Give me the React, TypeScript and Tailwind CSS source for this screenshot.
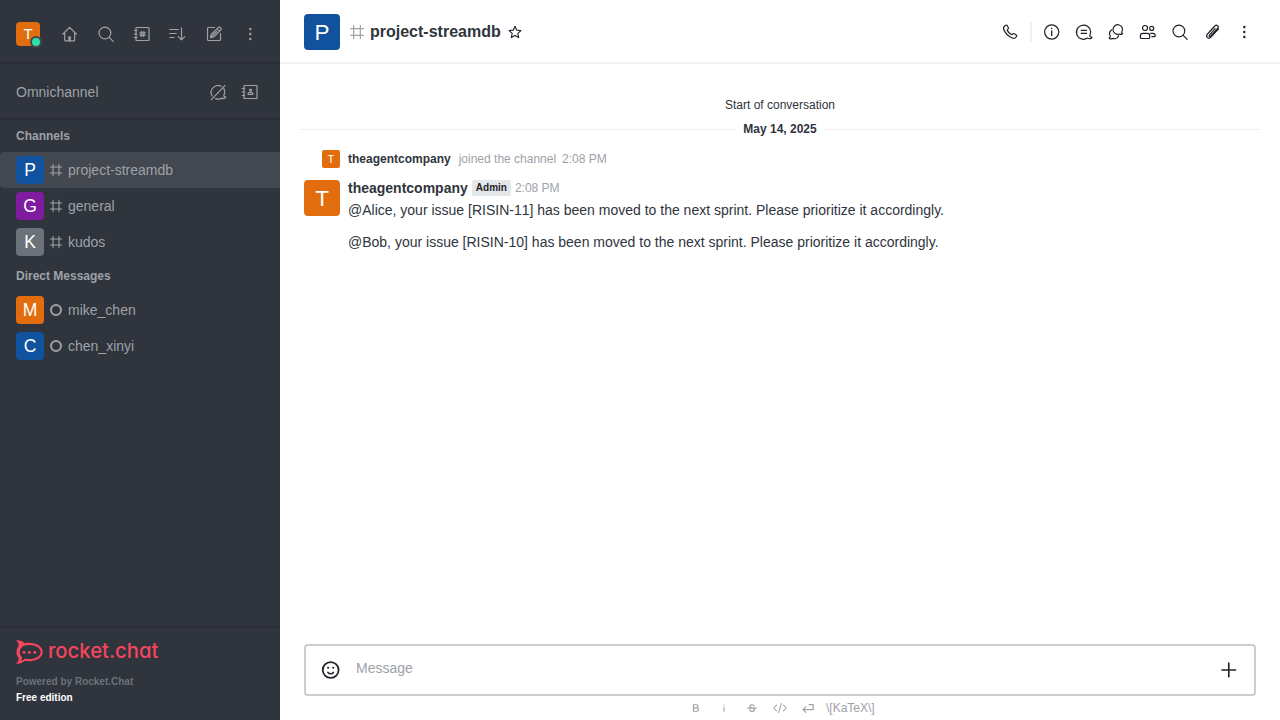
import type { ReactNode } from 'react';

type IconProps = { children: ReactNode; size?: number; className?: string; width?: number };

function Icon({ children, size = 20, className = '', width = 1.2 }: IconProps) {
  return (
    <svg
      width={size}
      height={size}
      viewBox="0 0 20 20"
      fill="none"
      stroke="currentColor"
      strokeWidth={width}
      strokeLinecap="round"
      strokeLinejoin="round"
      className={`shrink-0 ${className}`}
    >
      {children}
    </svg>
  );
}

const Home = () => (
  <Icon>
    <path d="M2.700 10.200 9.600 3.400l6.900 6.800M4.700 8.600v7.400a.9.9 0 0 0 .9.9h8.100a.9.9 0 0 0 .9-.9V8.600" />
    <path d="M8.600 16.800v-4.200h2v4.200z" fill="currentColor" strokeWidth="0.600" />
  </Icon>
);
const Search = () => (
  <Icon>
    <circle cx="8.900" cy="9" r="5.900" />
    <path d="m13.200 13.300 4 4" />
  </Icon>
);
const Directory = () => (
  <Icon>
    <rect x="4" y="3.500" width="13" height="13" rx="0.600" />
    <path d="M2.200 6.500H5M2.200 10H5M2.200 13.500H5" />
    <path d="M9.500 7.500l-.3 5M11.900 7.500l-.3 5M8 8.900h5.200M7.900 11.200h5.200" strokeWidth="1.300" />
  </Icon>
);
const Sort = () => (
  <Icon>
    <path d="M1.800 5.500h8.600M1.800 9.500h6.400M1.800 13.500h4.400M13.500 3.800v12M10.300 12.700l3.200 3.200 3.200-3.200" />
  </Icon>
);
const Compose = () => (
  <Icon>
    <path d="M10.500 3.500H4.400a.9.9 0 0 0-.9.9v11.200a.9.9 0 0 0 .9.9h11.200a.9.9 0 0 0 .9-.9V9.500" />
    <path d="m6.500 13.700.7-3.200 7.200-7.200a1.200 1.200 0 0 1 1.700 0l.8.8a1.200 1.200 0 0 1 0 1.700L9.700 13zM13.100 4.700l2.400 2.400M7.200 13l5.500-5.500" />
  </Icon>
);
const Kebab = () => (
  <Icon>
    <g fill="currentColor" stroke="none">
      <circle cx="10.300" cy="4.900" r="1.250" />
      <circle cx="10.300" cy="9.900" r="1.250" />
      <circle cx="10.300" cy="14.900" r="1.250" />
    </g>
  </Icon>
);
const LivechatOff = () => (
  <Icon>
    <path d="M4.100 14A7 7 0 0 1 13.400 4.300M15.700 6.300c1.400 2.400 1.400 4.700.2 7-.4.8.5 1.500 1.900 1.900-.7 1.300-2.200 1.700-3.800.9-2.200 1.200-4.400 1.300-6.500.5M3.400 17.600 17.100 3.400" />
  </Icon>
);
const Contacts = () => (
  <Icon>
    <rect x="4" y="3.500" width="13" height="13" rx="0.600" />
    <path d="M2.200 6.500h2.600M2.200 10h2.600M2.200 13.500h2.600" />
    <circle cx="10.500" cy="8.200" r="1" />
    <path d="M8.100 12.400v-1c0-.5.4-.9.9-.9h3c.5 0 .9.4.9.9v1z" />
  </Icon>
);
const Hash = ({ size = 16, className = '' }: { size?: number; className?: string }) => (
  <Icon size={size} className={className} width={1.350}>
    <path d="M6.300 2.900v14.200M13.700 2.900v14.200M2.900 6.300h14.200M2.900 13.700h14.200" />
  </Icon>
);
const Phone = () => (
  <Icon>
    <path d="M4.200 4.500 5.400 3.400c.6-.5 1.300-.4 1.800.2l1.100 1.900c.3.6.2 1.100-.3 1.600l-.8.8c.5 1.700 2.800 4 4.700 4.800l.9-.8c.5-.4 1-.5 1.600-.1l1.800 1.200c.6.500.7 1.100.2 1.700l-1.200 1.200c-1 .9-2.600.6-4.900-.8-2.900-1.700-4.700-3.700-6-6.200C3.300 6.900 3.300 5.400 4.200 4.500Z" />
  </Icon>
);
const Info = () => (
  <Icon>
    <circle cx="9.700" cy="10" r="7.100" />
    <path d="M9.700 9v4.500" strokeWidth="1.300" />
    <circle cx="9.700" cy="6.500" r="0.800" fill="currentColor" stroke="none" />
  </Icon>
);
const Threads = () => (
  <Icon>
    <path d="M15.900 13.400a7.100 7.100 0 1 0-2.400 2.700c1.800 1.100 3.900.7 4.500-.8-1.600-.3-2.500-.9-2.100-1.900ZM7.200 8.400h5.300M7.200 11.400h5.300" />
  </Icon>
);
const Discussion = () => (
  <Icon>
    <path d="M15.600 10.400a4.800 4.800 0 1 0-2.100 1.600c1.300.7 2.500.5 3.200-.4-.9-.2-1.200-.5-1.100-1.200Z" />
    <path d="M5.500 7.900a4.600 4.600 0 0 0-1.200 6.100c.2.800-.1 1.500-1.200 1.900.8 1.100 2.300 1.300 3.700.5a4.600 4.600 0 0 0 5.800-2.700" />
  </Icon>
);
const Members = () => (
  <Icon>
    <circle cx="7" cy="6" r="2.500" />
    <circle cx="13.700" cy="6.400" r="2" />
    <path d="M4.800 11.300h4.500a2.400 2.400 0 0 1 2.400 2.400v1.900a.9.9 0 0 1-.9.9H3.300a.9.9 0 0 1-.9-.9v-1.900a2.400 2.400 0 0 1 2.400-2.400ZM12.700 11.300h2.100a2.400 2.400 0 0 1 2.400 2.400v.1a.9.9 0 0 1-.9.9h-2.400" />
  </Icon>
);
const Clip = () => (
  <Icon>
    <path d="m13.200 6.600-5.900 6.500c-.7.900.4 1.900 1.300 1.100l7-7.700c1.800-2.200-.9-4.500-2.800-2.500l-7.500 8.200c-2.100 2.600 1.200 5.500 3.600 3l7.500-8.200" />
    <path d="m11.500 6-5.700 6.200" strokeWidth="0.500" />
  </Icon>
);

const avatarSizes = {
  18: 'size-[18px] rounded-[2px]',
  24: 'size-6 rounded-[4px]',
  28: 'size-7 rounded-[4px]',
  36: 'size-9 rounded-[4px]',
};

function Avatar({ letter, color, size }: { letter: string; color: string; size: 18 | 24 | 28 | 36 }) {
  return (
    <svg viewBox="0 0 200 200" className={`shrink-0 ${avatarSizes[size]} ${color}`}>
      <text x="100" y="100" dy="0.36em" textAnchor="middle" fontSize="125" fill="#fff">
        {letter}
      </text>
    </svg>
  );
}

type RowProps = { letter: string; color: string; name: string; dm?: boolean; selected?: boolean };

function RoomRow({ letter, color, name, dm, selected }: RowProps) {
  return (
    <a className={`flex h-9 items-center px-4 text-sm ${selected ? 'rounded-l-[4px] bg-[#43474f]' : ''}`}>
      <Avatar letter={letter} color={color} size={28} />
      {dm ? (
        <span className="mx-[6px] size-3 shrink-0 rounded-full border-2 border-[#9ea2a8]" />
      ) : (
        <Hash className="mx-1" />
      )}
      <span>{name}</span>
    </a>
  );
}

const channels: RowProps[] = [
  { letter: 'P', color: 'bg-[#10529e]', name: 'project-streamdb', selected: true },
  { letter: 'G', color: 'bg-[#7f1b9f]', name: 'general' },
  { letter: 'K', color: 'bg-[#6c727a]', name: 'kudos' },
];
const directs: RowProps[] = [
  { letter: 'M', color: 'bg-[#e26d0e]', name: 'mike_chen', dm: true },
  { letter: 'C', color: 'bg-[#10529e]', name: 'chen_xinyi', dm: true },
];

function Sidebar() {
  return (
    <aside className="flex w-[280px] shrink-0 flex-col bg-[#2f343d] text-[#9ea2a8]">
      <div className="flex h-16 items-center justify-between border-b-2 border-[#2a2d36] pt-[6px] pr-5 pl-4">
        <div className="relative mr-1">
          <Avatar letter="T" color="bg-[#e26d0e]" size={24} />
          <span className="absolute -right-[2px] -bottom-[2px] size-3 rounded-full border-2 border-[#43474f] bg-[#2de0a5]" />
        </div>
        <Home />
        <Search />
        <Directory />
        <Sort />
        <Compose />
        <Kebab />
      </div>
      <div className="flex h-14 items-center border-b-2 border-[#2a2d36] pt-[2px] pr-5 pl-4 text-sm">
        <span className="flex-1">Omnichannel</span>
        <div className="flex gap-3">
          <LivechatOff />
          <Contacts />
        </div>
      </div>
      <nav className="flex-1">
        <h2 className="flex h-8 items-center px-4 text-xs font-bold">Channels</h2>
        {channels.map((c) => (
          <RoomRow key={c.name} {...c} />
        ))}
        <h2 className="flex h-8 items-center px-4 text-xs font-bold">Direct Messages</h2>
        {directs.map((c) => (
          <RoomRow key={c.name} {...c} />
        ))}
      </nav>
      <footer className="h-[94px] border-t-2 border-[#2a2d36] px-4 pt-3 text-[10px] leading-4 font-bold">
        <svg width="160" height="24" viewBox="0 0 160 24" className="mb-[10px] block overflow-visible" fill="#f5455c">
          <path
            fillRule="evenodd"
            d="M0 .3C3.200-.3 6.500.9 8.800 3.200c9-1.900 18 2.300 18 8.800s-9 10.700-18 8.800C6.500 23.100 3.200 24.300 0 23.700c1.800-1.800 3-3.600 2.600-5.700C-.2 14.500-.2 9.500 2.600 6 3 3.900 1.800 2.100 0 .3Zm5.400 7.500C3 10.800 3.500 14.700 6 17c.2 1.400-.1 2.700-.8 3.900 1.500-.4 2.700-1.300 3.400-2.500 8.300 2.100 16-1.300 16-6.400S16.500 3.400 8 5.700C6.900 6.300 6.100 6.900 5.400 7.800Z"
          />
          <circle cx="8" cy="12.200" r="1.500" />
          <circle cx="13.400" cy="12.200" r="1.500" />
          <circle cx="18.800" cy="12.200" r="1.500" />
          <text
            x="31.900"
            y="18.200"
            textLength="110.500"
            lengthAdjust="spacingAndGlyphs"
            fontSize="20.500"
            fontWeight="550"
            className="font-['Inter',sans-serif] [font-feature-settings:'cv11']"
          >
            rocket.chat
          </text>
        </svg>
        <p className="text-[#6c727a]">Powered by Rocket.Chat</p>
        <p className="text-white">Free edition</p>
      </footer>
    </aside>
  );
}

function RoomHeader() {
  return (
    <header className="flex h-16 shrink-0 items-center border-b-2 border-[#f0f1f3] px-6 pt-[2px]">
      <Avatar letter="P" color="bg-[#10529e]" size={36} />
      <Hash size={18} className="mr-1 ml-2 text-[#9ea2a8]" />
      <h1 className="text-base font-bold">project-streamdb</h1>
      <Icon size={16} className="ml-[6px] text-[#1f2329]" width={1.400}>
        <path d="m10 2.800 2.200 4.900 5.200.5-3.900 3.600 1.100 5.200-4.600-2.700L5.400 17l1.100-5.200-3.900-3.600 5.200-.5Z" />
      </Icon>
      <div className="ml-auto flex items-center gap-3 pr-[2px] text-[#1f2329]">
        <Phone />
        <span className="-mx-[2px] h-5 w-[2px] bg-[#eeeff1]" />
        <Info />
        <Threads />
        <Discussion />
        <Members />
        <Search />
        <Clip />
        <Kebab />
      </div>
    </header>
  );
}

function Messages() {
  return (
    <section className="flex-1 pt-[31px]">
      <p className="text-center text-xs leading-5">Start of conversation</p>
      <div className="mx-5 mt-1 flex h-5 items-center gap-2 text-xs font-bold">
        <span className="h-px flex-1 bg-[#eeeff1]" />
        May 14, 2025
        <span className="h-px flex-1 bg-[#eeeff1]" />
      </div>
      <div className="mt-[10px] flex h-5 items-center pl-[42px] text-xs text-[#9ea2a8]">
        <Avatar letter="T" color="bg-[#e26d0e]" size={18} />
        <b className="ml-2 text-[#2f343d]">theagentcompany</b>
        <span className="ml-2">joined the channel</span>
        <span className="ml-[6px]">2:08 PM</span>
      </div>
      <article className="mt-[9px] flex gap-2 px-6">
        <div className="pt-[2px]">
          <Avatar letter="T" color="bg-[#e26d0e]" size={36} />
        </div>
        <div className="text-sm">
          <div className="flex h-5 items-center">
            <b>theagentcompany</b>
            <span className="ml-1 flex h-4 items-center rounded-[2px] bg-[#e4e7ea] px-1 text-[10px] font-bold text-[#1f2329]">
              Admin
            </span>
            <span className="ml-1 text-xs text-[#9ea2a8]">2:08 PM</span>
          </div>
          <p className="mt-[2px] leading-5">
            @Alice, your issue [RISIN-<span className="[font-kerning:none]">11</span>] has been moved to the next
            sprint. Please prioritize it accordingly.
          </p>
          <p className="mt-3 leading-5">
            @Bob, your issue [RISIN-10] has been moved to the next sprint. Please prioritize it accordingly.
          </p>
        </div>
      </article>
    </section>
  );
}

function Composer() {
  return (
    <div className="h-[76px] shrink-0 px-6">
      <div className="flex h-[52px] items-center rounded-[4px] border-2 border-[#cbced1] px-[14px] text-[#1f2329]">
        <Icon size={22} width={1.600}>
          <circle cx="9.700" cy="10" r="7.200" />
          <path d="M7.200 12.200c1.200 1.500 3.800 1.500 5 0" strokeWidth="1.400" />
          <g fill="currentColor" stroke="none">
            <circle cx="7.400" cy="7.900" r="0.950" />
            <circle cx="12" cy="7.900" r="0.950" />
          </g>
        </Icon>
        <span className="ml-[14px] flex-1 pb-1 text-sm text-[#9ea2a8]">Message</span>
        <Icon size={22} width={1.500}>
          <path d="M9.800 3.800v12.400M3.600 10H16" />
        </Icon>
      </div>
      <div className="flex h-6 items-center gap-3 pl-[384px] text-xs text-[#9ea2a8]">
        <Icon size={16} width={1.400}>
          <path d="M6.800 6h3.700a1.900 1.900 0 0 1 0 3.900H6.800zM6.800 9.900H11a2.100 2.100 0 0 1 0 4.200H6.800z" />
        </Icon>
        <Icon size={16} width={1.400}>
          <path d="M10 8.800v5.400M10 6.200v.1" />
        </Icon>
        <Icon size={16} width={1.500}>
          <path d="M12.800 7.500C12.300 5.300 7.300 5.500 7.300 7.900c0 2.700 5.700 1.500 5.700 4.300 0 2.800-5.600 2.700-6 .1M4.800 10.200h10.400" />
        </Icon>
        <Icon size={16} width={1.300}>
          <path d="M5.600 6.300 2 10l3.600 3.700M14.400 6.300 18 10l-3.600 3.700M11.800 4.300 8.200 15.700" />
        </Icon>
        <Icon size={16} width={1.500}>
          <path d="M11.500 5.800h5V12H3.800M7.200 8.600 3.800 12l3.400 3.400" />
        </Icon>
        <span className="-ml-[2px]">\[KaTeX\]</span>
      </div>
    </div>
  );
}

export default function App() {
  return (
    <div className="flex h-[720px] w-[1280px] overflow-hidden bg-white font-['Liberation_Sans',Arial,sans-serif] text-[#2f343d]">
      <Sidebar />
      <main className="flex min-w-0 flex-1 flex-col">
        <RoomHeader />
        <Messages />
        <Composer />
      </main>
    </div>
  );
}
